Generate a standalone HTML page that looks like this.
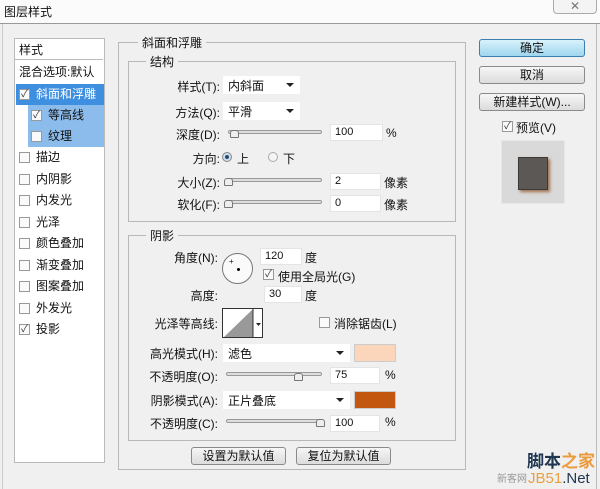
<!DOCTYPE html>
<html><head><meta charset="utf-8"><style>
*{margin:0;padding:0;box-sizing:border-box}
body{width:600px;height:489px;background:#f0f0f0;font-family:"Liberation Sans","Noto Sans CJK SC",sans-serif;font-size:12px;color:#111;position:relative;overflow:hidden}
.a{position:absolute;white-space:nowrap}
.lbl{position:absolute;text-align:right;white-space:nowrap}
.box{position:absolute;border:1px solid #b8b8b8}
.inp{position:absolute;background:#fff;border:1px solid #e4e4e4;height:17px;padding:1px 4px;font-size:11px}
.dd{position:absolute;background:#fff;height:18px;padding:1px 5px}
.dd:after{content:"";position:absolute;right:6px;top:7px;border:4px solid transparent;border-top:4px solid #222}
.sl{position:absolute;height:4px;border:1px solid #999;background:#ddd;border-radius:2px}
.th{position:absolute;width:9px;height:8px;border:1px solid #777;background:#eee;border-radius:3px 3px 1px 1px}
.cb{position:absolute;width:11px;height:11px;border:1px solid #999;background:#fafafa;font-size:10px;line-height:9px;text-align:center;color:#333}
.li{position:absolute;left:16px;width:88px;height:21px;line-height:21px;padding-left:20px}
.li .cb{left:3px;top:5px}
.btn{position:absolute;border:1px solid #8a8a8a;border-radius:3px;background:linear-gradient(#f6f6f6,#dcdcdc);text-align:center;height:18px;line-height:16px}
</style></head><body>
<div class="a" style="left:0;top:0;width:600px;height:23px;background:#fbfbfb"></div>
<div class="a" style="left:4px;top:3px;font-size:12px">图层样式</div>
<div class="a" style="left:553px;top:-2px;width:44px;height:16px;border:1px solid #aaa;border-radius:0 0 4px 4px;background:#f4f4f4;text-align:center;color:#777;font-size:12px;line-height:14px">✕</div>
<div class="a" style="left:0;top:23px;width:600px;height:1px;background:#999"></div>
<div class="a" style="left:2px;top:24px;width:1px;height:465px;background:#ccc"></div>
<div class="a" style="left:596px;top:24px;width:1px;height:465px;background:#bbb"></div>

<div class="a" style="left:14px;top:38px;width:91px;height:425px;background:#fff;border:1px solid #bbb"></div>
<div class="a" style="left:15px;top:39px;width:88px;height:21px;border-bottom:1px solid #bbb;padding:2px 4px;background:#fff">样式</div>
<div class="li" style="top:62px;padding-left:3px">混合选项:默认</div>
<div class="li" style="top:84px;background:#3f8fe0;color:#fff"><span class="cb">✓</span>斜面和浮雕</div>
<div class="li" style="top:105px;left:28px;width:76px;background:#8cbcec"><span class="cb">✓</span>等高线</div>
<div class="li" style="top:126px;left:28px;width:76px;background:#8cbcec"><span class="cb"></span>纹理</div>
<div class="li" style="top:147px"><span class="cb"></span>描边</div>
<div class="li" style="top:169px"><span class="cb"></span>内阴影</div>
<div class="li" style="top:190px"><span class="cb"></span>内发光</div>
<div class="li" style="top:212px"><span class="cb"></span>光泽</div>
<div class="li" style="top:233px"><span class="cb"></span>颜色叠加</div>
<div class="li" style="top:255px"><span class="cb"></span>渐变叠加</div>
<div class="li" style="top:276px"><span class="cb"></span>图案叠加</div>
<div class="li" style="top:298px"><span class="cb"></span>外发光</div>
<div class="li" style="top:319px"><span class="cb">✓</span>投影</div>

<div class="box" style="left:118px;top:42px;width:348px;height:428px"></div>
<div class="a" style="left:138px;top:34px;background:#f0f0f0;padding:0 4px">斜面和浮雕</div>
<div class="box" style="left:128px;top:61px;width:328px;height:161px"></div>
<div class="a" style="left:146px;top:53px;background:#f0f0f0;padding:0 4px">结构</div>
<div class="box" style="left:128px;top:235px;width:328px;height:206px"></div>
<div class="a" style="left:146px;top:227px;background:#f0f0f0;padding:0 4px">阴影</div>

<div class="lbl" style="left:140px;width:80px;top:78px">样式(T):</div>
<div class="dd" style="left:223px;top:76px;width:77px">内斜面</div>
<div class="lbl" style="left:140px;width:80px;top:104px">方法(Q):</div>
<div class="dd" style="left:223px;top:102px;width:77px">平滑</div>
<div class="lbl" style="left:140px;width:80px;top:126px">深度(D):</div>
<div class="sl" style="left:228px;top:130px;width:94px"></div><div class="th" style="left:230px;top:130px"></div>
<div class="inp" style="left:330px;top:124px;width:53px">100</div><div class="a" style="left:386px;top:126px">%</div>
<div class="lbl" style="left:140px;width:80px;top:150px">方向:</div>
<div class="a" style="left:222px;top:152px;width:10px;height:10px;border-radius:50%;border:1px solid #888;background:radial-gradient(#246 30%,#cde 40%)"></div>
<div class="a" style="left:237px;top:150px">上</div>
<div class="a" style="left:268px;top:152px;width:10px;height:10px;border-radius:50%;border:1px solid #aaa;background:#f4f4f4"></div>
<div class="a" style="left:283px;top:150px">下</div>
<div class="lbl" style="left:140px;width:80px;top:174px">大小(Z):</div>
<div class="sl" style="left:228px;top:178px;width:94px"></div><div class="th" style="left:224px;top:178px"></div>
<div class="inp" style="left:330px;top:173px;width:51px">2</div><div class="a" style="left:384px;top:174px">像素</div>
<div class="lbl" style="left:140px;width:80px;top:196px">软化(F):</div>
<div class="sl" style="left:228px;top:200px;width:94px"></div><div class="th" style="left:224px;top:200px"></div>
<div class="inp" style="left:330px;top:195px;width:51px">0</div><div class="a" style="left:384px;top:196px">像素</div>

<div class="lbl" style="left:140px;width:78px;top:249px">角度(N):</div>
<div class="a" style="left:222px;top:253px;width:31px;height:31px;border-radius:50%;border:1px solid #777;background:#fafafa"></div>
<div class="a" style="left:237px;top:268px;width:3px;height:3px;background:#000;border-radius:50%"></div>
<div class="a" style="left:229px;top:257px;font-size:8px">+</div>
<div class="inp" style="left:260px;top:248px;width:42px">120</div><div class="a" style="left:305px;top:249px">度</div>
<div class="cb" style="left:263px;top:269px">✓</div><div class="a" style="left:278px;top:268px">使用全局光(G)</div>
<div class="lbl" style="left:140px;width:78px;top:287px">高度:</div>
<div class="inp" style="left:264px;top:286px;width:38px">30</div><div class="a" style="left:305px;top:287px">度</div>
<div class="lbl" style="left:130px;width:88px;top:315px">光泽等高线:</div>
<div class="a" style="left:222px;top:308px;width:41px;height:30px;border:1px solid #333;background:#fff;overflow:hidden">
<svg width="41" height="30"><polygon points="0,29 30,0 30,29" fill="#999"/><line x1="30" y1="0" x2="30" y2="30" stroke="#333"/><polygon points="33,14 38,14 35.5,17" fill="#222"/></svg></div>
<div class="cb" style="left:319px;top:317px"></div><div class="a" style="left:334px;top:315px">消除锯齿(L)</div>
<div class="lbl" style="left:130px;width:88px;top:345px">高光模式(H):</div>
<div class="dd" style="left:223px;top:344px;width:127px">滤色</div>
<div class="a" style="left:354px;top:344px;width:42px;height:18px;background:#fcd6bb;border:1px solid #ccc"></div>
<div class="lbl" style="left:130px;width:88px;top:368px">不透明度(O):</div>
<div class="sl" style="left:226px;top:372px;width:96px"></div><div class="th" style="left:294px;top:373px"></div>
<div class="inp" style="left:330px;top:367px;width:50px">75</div><div class="a" style="left:385px;top:368px">%</div>
<div class="lbl" style="left:130px;width:88px;top:392px">阴影模式(A):</div>
<div class="dd" style="left:223px;top:391px;width:127px">正片叠底</div>
<div class="a" style="left:354px;top:391px;width:42px;height:18px;background:#c45710;border:1px solid #ccc"></div>
<div class="lbl" style="left:130px;width:88px;top:415px">不透明度(C):</div>
<div class="sl" style="left:226px;top:419px;width:96px"></div><div class="th" style="left:316px;top:419px"></div>
<div class="inp" style="left:330px;top:415px;width:50px">100</div><div class="a" style="left:385px;top:415px">%</div>

<div class="btn" style="left:191px;top:447px;width:95px">设置为默认值</div>
<div class="btn" style="left:296px;top:447px;width:95px">复位为默认值</div>

<div class="btn" style="left:479px;top:39px;width:106px;background:linear-gradient(#d8f2fb,#9fd6ee);border-color:#3c7fb1">确定</div>
<div class="btn" style="left:479px;top:66px;width:106px">取消</div>
<div class="btn" style="left:479px;top:93px;width:106px">新建样式(W)...</div>
<div class="cb" style="left:502px;top:121px">✓</div><div class="a" style="left:516px;top:119px">预览(V)</div>
<div class="a" style="left:501px;top:140px;width:64px;height:64px;background:#d9d9d9;border:1px solid #e8e8e8"></div>
<div class="a" style="left:518px;top:157px;width:30px;height:33px;background:#5b5856;border:1px solid #3c3a38;box-shadow:2px 2px 3px #a0704d"></div>

<div class="a" style="left:497px;top:470px;font-size:10px;color:#999">新客网</div>
<div class="a" style="left:527px;top:447px;font-size:17px;font-weight:bold"><span style="color:#1f3550">脚本</span><span style="color:#eb9a3c">之家</span></div>
<div class="a" style="left:528px;top:470px;font-size:15px"><span style="color:#e9a040">JB51</span><span style="color:#1f3550">.Net</span></div>
</body></html>
